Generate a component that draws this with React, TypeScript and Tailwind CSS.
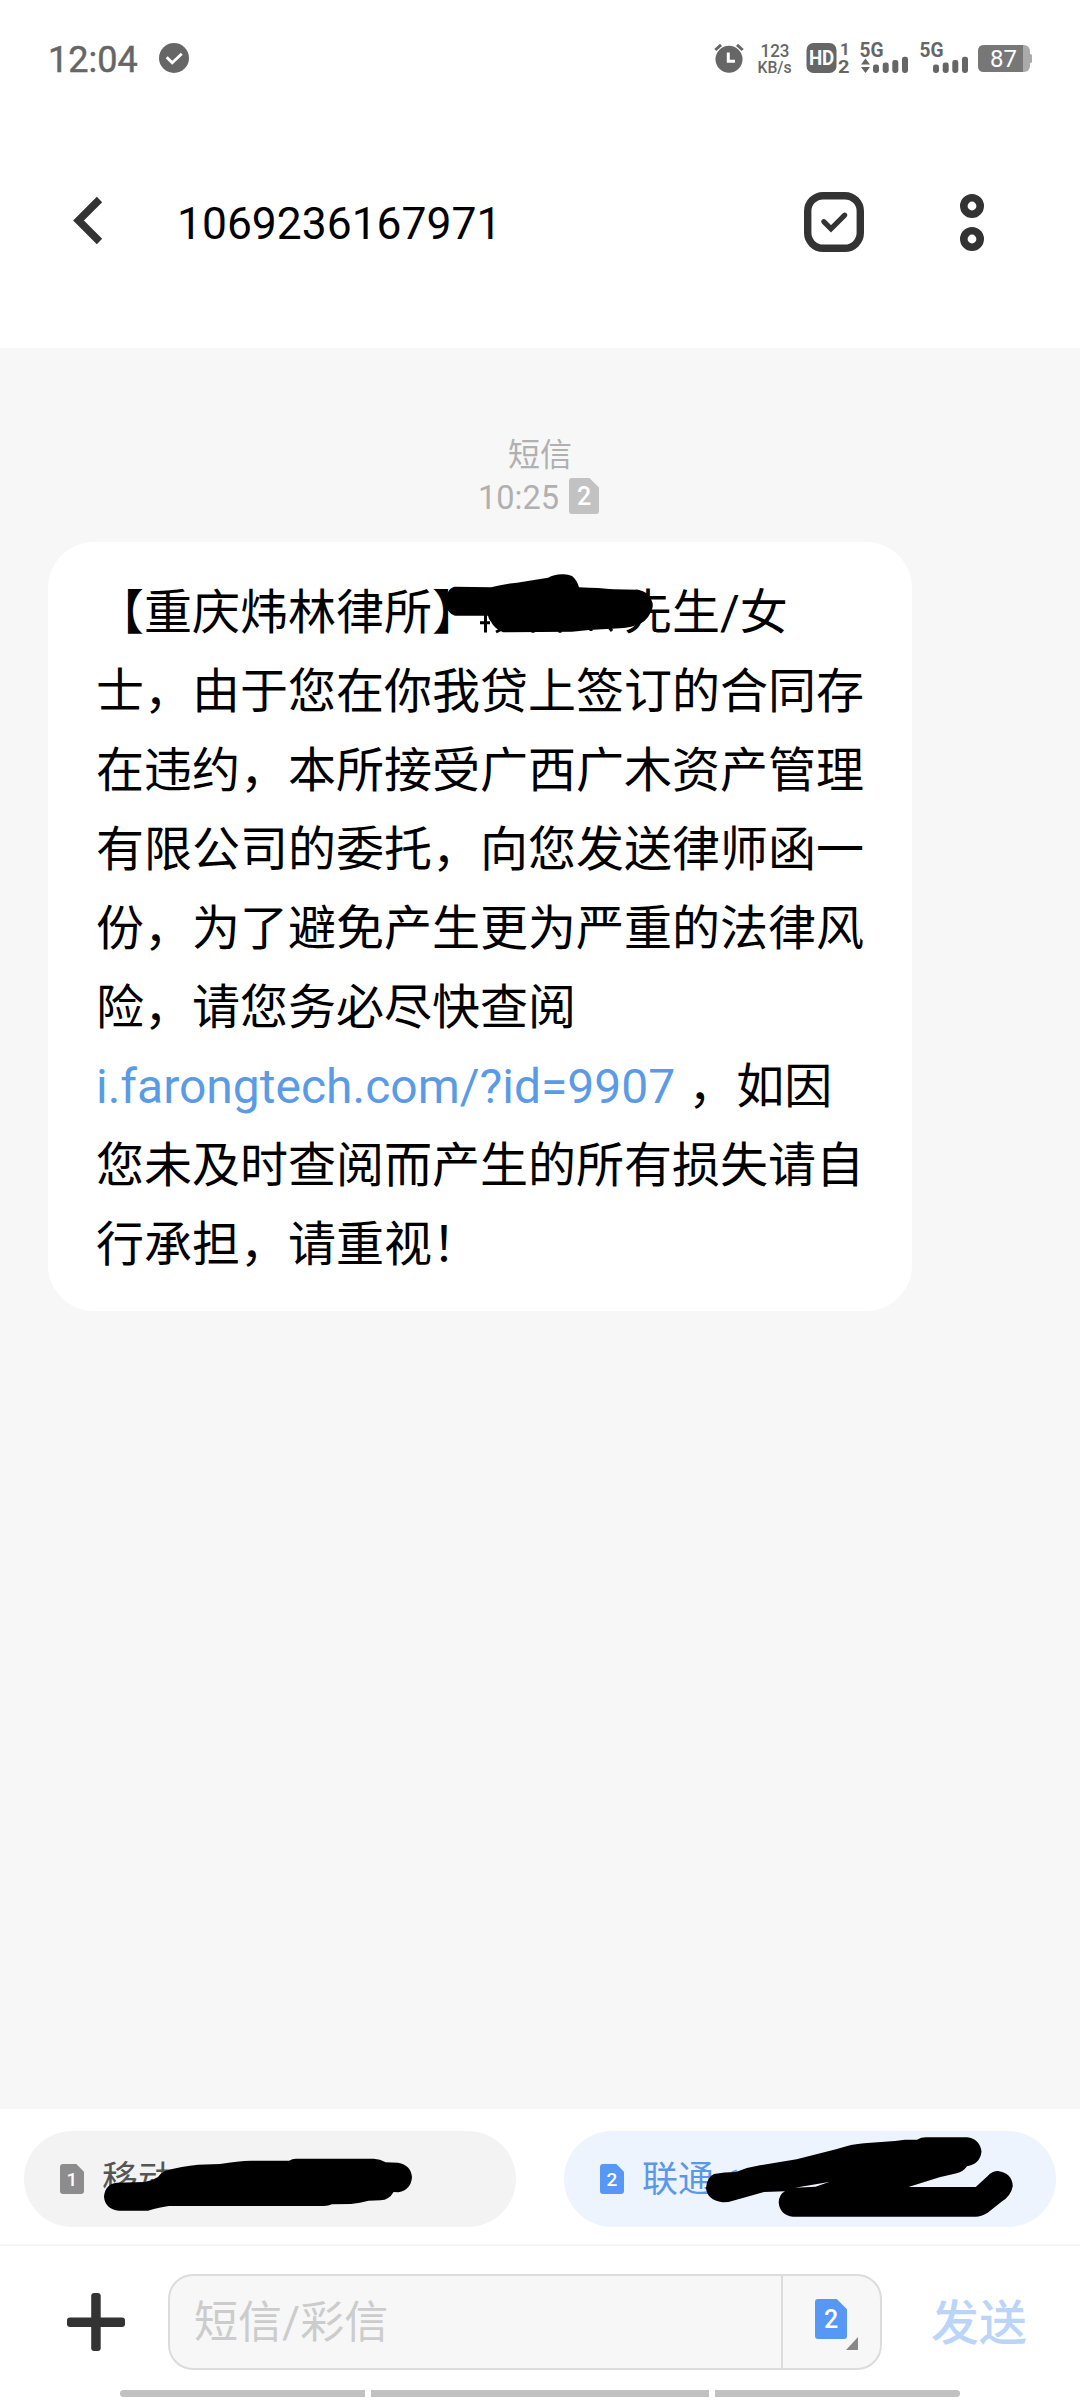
import React from "react";

function SimBadge({
  digit,
  width,
  height,
  fill,
  size,
}: {
  digit: string;
  width: number;
  height: number;
  fill: string;
  size: number;
}) {
  const cut = width * 0.32;
  const r = 3;
  const d = `M${r} 0H${width - cut}L${width} ${cut}V${height - r}Q${width} ${height} ${width - r} ${height}H${r}Q0 ${height} 0 ${height - r}V${r}Q0 0 ${r} 0Z`;
  return (
    <svg width={width} height={height} className="shrink-0">
      <path d={d} fill={fill} />
      <text
        x={width / 2}
        y={height / 2 + size * 0.36}
        textAnchor="middle"
        fontFamily="Roboto, sans-serif"
        fontWeight="500"
        fontSize={size}
        fill="#fff"
      >
        {digit}
      </text>
    </svg>
  );
}

function Signal({ arrows, width }: { arrows?: boolean; width: number }) {
  const x0 = width - 35;
  const bars = [
    [0, 21.5],
    [9.7, 19.5],
    [19.3, 17],
    [29, 13.7],
  ];
  return (
    <svg width={width} height="30" className="overflow-visible" fill="#666">
      <text
        x="-0.5"
        y="14.3"
        fontFamily="Roboto, sans-serif"
        fontWeight="700"
        fontSize="20"
        textLength="24"
        lengthAdjust="spacingAndGlyphs"
      >
        5G
      </text>
      {arrows && <path d="M1 21.5L5.5 15.5L10 21.5ZM1 24L5.5 30L10 24Z" />}
      {bars.map(([x, y]) => (
        <rect key={x} x={x0 + x} y={y} width="6" height={30 - y} rx="2.4" />
      ))}
    </svg>
  );
}

function StatusBar() {
  return (
    <div className="flex h-[116px] items-center pl-[48px] pr-[48px] text-[#666]">
      <span className="mt-[3px] text-[36px] leading-none [-webkit-text-stroke:0.5px_#666]">12:04</span>
      <svg width="30" height="30" className="ml-[21px]">
        <circle cx="15" cy="15" r="15" fill="#666" />
        <path d="M7.7 14.2L13.2 19.8L22.8 10.8" fill="none" stroke="#fff" strokeWidth="2.8" />
      </svg>
      <div className="ml-auto flex items-center">
        <svg width="30" height="30" className="overflow-visible">
          <circle cx="15" cy="16.3" r="13.5" fill="#666" />
          <path d="M1.3 7L7 1.8M23 1.8L28.7 7" stroke="#666" strokeWidth="3" />
          <path d="M14.3 9.5V18.3H21" fill="none" stroke="#fff" strokeWidth="3" />
        </svg>
        <svg
          width="34"
          height="30"
          className="ml-[14px] overflow-visible"
          fontFamily="Roboto, sans-serif"
          fontWeight="500"
          fill="#666"
        >
          <text x="2.5" y="14" fontSize="18" textLength="29" lengthAdjust="spacingAndGlyphs">123</text>
          <text x="-0.5" y="29.6" fontSize="16.5" textLength="34" lengthAdjust="spacingAndGlyphs">KB/s</text>
        </svg>
        <svg width="43" height="30" className="ml-[14px] overflow-visible" fontFamily="Roboto, sans-serif" fontWeight="700">
          <rect x="0.5" width="30" height="30" rx="7" fill="#666" />
          <text x="2.9" y="22.2" fontSize="20" fill="#fff" textLength="25.4" lengthAdjust="spacingAndGlyphs">
            HD
          </text>
          <text x="34" y="12.3" fontSize="17" fill="#666">1</text>
          <text x="32" y="29.7" fontSize="17.5" fill="#666" textLength="11.5" lengthAdjust="spacingAndGlyphs">2</text>
        </svg>
        <div className="ml-[11px] flex">
          <Signal arrows width={48} />
        </div>
        <div className="ml-[12px] flex">
          <Signal width={48} />
        </div>
        <svg width="54" height="28" className="ml-[10px]">
          <rect x="0" y="1" width="52" height="27" rx="6" fill="#aaa" />
          <path d="M6 1H45V28H6Q0 28 0 22V7Q0 1 6 1Z" fill="#777" />
          <rect x="50" y="10" width="4" height="9" rx="1.5" fill="#aaa" />
          <text x="12" y="23" fontFamily="Roboto, sans-serif" fontSize="24" fill="#fff">
            87
          </text>
        </svg>
      </div>
    </div>
  );
}

function Header() {
  return (
    <div className="flex h-[232px] items-center pb-[20px] pl-[73px] pr-[96px]">
      <svg width="30" height="50" className="-mt-[2px]">
        <path d="M26.5 3.5L5.5 24.5L26.5 45.5" fill="none" stroke="#333" strokeWidth="7.6" />
      </svg>
      <h1 className="ml-[74px] mt-[4px] text-[44.4px] leading-none text-black">1069236167971</h1>
      <svg width="60" height="60" className="ml-auto">
        <rect x="3.7" y="3.7" width="52.6" height="52.6" rx="15.5" fill="none" stroke="#333" strokeWidth="7.4" />
        <path d="M19.8 29.7L27 36.9L40.7 23.2" fill="none" stroke="#333" strokeWidth="5.2" strokeLinecap="round" />
      </svg>
      <svg width="24" height="57" className="ml-[96px]" fill="none" stroke="#333" strokeWidth="7.6">
        <circle cx="12" cy="12" r="8.2" />
        <circle cx="12" cy="45" r="8.2" />
      </svg>
    </div>
  );
}

function Message() {
  return (
    <div className="relative ml-[48px] mt-[28px] h-[769px] w-[864px] rounded-[46px] bg-white pl-[48px] pt-[31px] text-[48px] leading-[79px] text-black">
      <p className="whitespace-nowrap">
        【重庆炜林律所】
        <span className="inline-block w-[144px]" />
        先生/女
        <br />
        士，由于您在你我贷上签订的合同存
        <br />
        在违约，本所接受广西广木资产管理
        <br />
        有限公司的委托，向您发送律师函一
        <br />
        份，为了避免产生更为严重的法律风
        <br />
        险，请您务必尽快查阅
        <br />
        <span className="text-[#5b9be6]">i.farongtech.com/?id=9907</span>
        <span className="ml-px"> ，如因</span>
        <br />
        您未及时查阅而产生的所有损失请自
        <br />
        行承担，请重视！
      </p>
      {/* Marker covering the recipient's name */}
      <svg viewBox="440 570 220 68" width="220" height="68" className="absolute left-[392px] top-[28px]">
        <path d="M446.5 603Q446 588 455 586.7L491 587.3Q503 584 517 582.7L548 577.7Q554 574.5 562 574.3Q568 574 572 576Q577 580 579 587.3Q600 588 613.5 589.3L637.6 589.7Q648 591 651.4 600Q653.5 604 652.4 608Q649 619 641 623.3Q632 628 620 628.3L589 630L572 631.7L503 632.3Q494 628 491 621.7Q488.5 619 488 615.7H455Q446 613 446.5 603Z" />
        <path d="M480 622.8H490M485.5 614V632.5M496 632L502 629M533 626V632.8M560 626V632.8M591 627V631M608 626L612 631" fill="none" stroke="#000" strokeWidth="3" />
      </svg>
    </div>
  );
}

function SimRow() {
  return (
    <div className="relative flex h-[137px] justify-between border-b-2 border-[#f5f5f5] px-[24px] pt-[22px] text-[36px] leading-none">
      <div className="flex h-[96px] w-[492px] items-center rounded-full bg-[#f3f3f3] pl-[36px] text-[#555]">
        <SimBadge digit="1" width={24} height={30} fill="#8c8c8c" size={19} />
        <span className="ml-[18px] mt-[2px]">移动</span>
      </div>
      <div className="flex h-[96px] w-[492px] items-center rounded-full bg-[#edf4fe] pl-[36px] text-[#5b98e8]">
        <SimBadge digit="2" width={24} height={30} fill="#5798f7" size={19} />
        <span className="ml-[18px] mt-[2px]">联通</span>
      </div>
      {/* Marker covering the phone numbers */}
      <svg viewBox="0 2109 1080 136" width="1080" height="136" className="absolute left-0 top-0">
        <path d="M104 2196.7Q105 2184 117 2182.7L144.6 2182Q152 2181 158 2177Q161 2173 165 2171Q182 2166 198 2164.7L220 2164Q238 2161 251 2160.7H289Q292 2158.7 296 2158.7H373.7Q380 2159 385.7 2162.3L398 2162.7Q411 2165 412 2177.3Q411 2190 398.5 2192.3L393.6 2192Q389 2200 380.6 2200.3L368.5 2200.7Q360 2203 351 2204L332 2204.3Q328 2206 324 2206H169Q160 2207 148 2210.7H119Q105 2209 104 2196.7Z" />
        <path d="M732 2173L737 2171" stroke="#5b98e8" strokeWidth="3" />
        <path
          fillRule="evenodd"
          d="M706 2188Q707 2177 714 2174Q724 2172 736 2172Q748 2167 760 2165.3L796.6 2159.3L836 2149.3Q852 2144 864 2143.3L895 2141L905 2139.7H917Q921 2137.3 926 2137.3H967Q980 2139 981.5 2151.7Q980 2164 967 2166.3Q963 2172 956.7 2173.3L939.5 2177.3L908.5 2187H975.7L987.7 2176Q992 2171 998 2171Q1012 2173 1012.8 2186Q1011 2196 1001.5 2201.7L987.7 2212.7Q981 2216.5 975.7 2216.7H793Q780 2215 778.7 2202.7Q779 2194 785 2191.3L764 2192L733 2200.7Q728 2202.5 722.5 2202.3Q707 2200 706 2188ZM795 2187.7L829 2182L815.5 2186.7Z"
        />
      </svg>
    </div>
  );
}

function Composer() {
  return (
    <div className="flex h-[144px] items-start pl-[67px] pt-[28px]">
      <svg width="58" height="96" className="shrink-0">
        <rect x="0" y="43.5" width="58" height="9.5" rx="3" fill="#333" />
        <rect x="24.2" y="19" width="9.5" height="58" rx="3" fill="#333" />
      </svg>
      <div className="ml-[43px] flex h-[96px] w-[714px] overflow-hidden rounded-[25px] border-2 border-[#dcdcdc] bg-[#f7f7f7]">
        <div className="flex w-[613px] items-center border-r-2 border-[#dcdcdc] pl-[24px] text-[44px] leading-none text-[#cccccc]">
          <span className="mt-[2px]">短信/彩信</span>
        </div>
        <div className="relative flex flex-1 pl-[32px] pt-[23px]">
          <SimBadge digit="2" width={32} height={40} fill="#5798f7" size={25} />
          <svg width="12" height="13" className="absolute left-[63px] top-[61px]">
            <path d="M12 0V13H0Z" fill="#888" />
          </svg>
        </div>
      </div>
      <span className="ml-[49px] mt-[2px] text-[48px] font-medium leading-[96px] text-[#bbd5f8]">发送</span>
    </div>
  );
}

export default function App() {
  return (
    <div
      lang="zh-CN"
      className="flex h-[2400px] w-[1080px] flex-col overflow-hidden bg-white font-[Roboto,'Noto_Sans_CJK_SC',sans-serif]"
    >
      <StatusBar />
      <Header />
      <main className="h-[1761px] bg-[#f7f7f7] pt-[86px]">
        <div className="flex flex-col items-center text-[32px] leading-[40px] text-[#b0b0b0]">
          <span className="mt-px -mb-px">短信</span>
          <div className="flex h-[40px] items-center pr-[3px]">
            <span className="mt-[7px] text-[32.6px]">10:25</span>
            <span className="ml-[10px] mt-[4px]">
              <SimBadge digit="2" width={30} height={36} fill="#c2c2c2" size={25} />
            </span>
          </div>
        </div>
        <Message />
      </main>
      <SimRow />
      <Composer />
      <div className="flex h-[7px] justify-center gap-[6px]">
        <div className="w-[245px] rounded-l-full bg-[#c1c1c1]" />
        <div className="w-[338px] bg-[#c1c1c1]" />
        <div className="w-[245px] rounded-r-full bg-[#c1c1c1]" />
      </div>
    </div>
  );
}
